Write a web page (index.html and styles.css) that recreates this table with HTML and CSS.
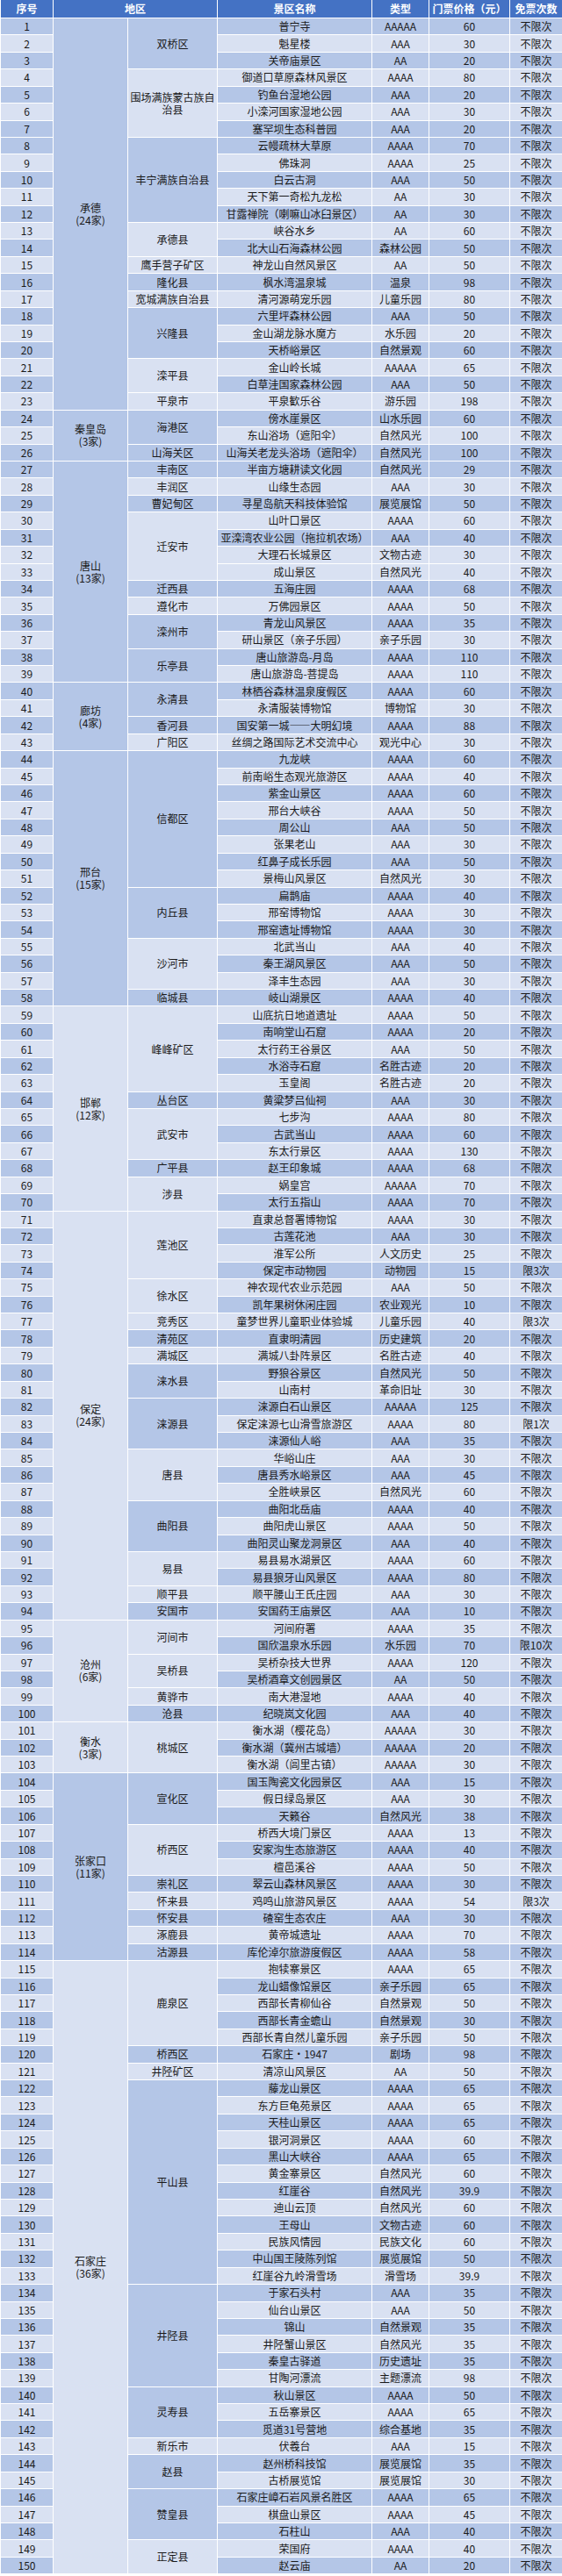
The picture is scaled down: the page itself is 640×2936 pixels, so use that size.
FILE: index.html
```html
<!DOCTYPE html>
<html lang="zh-CN">
<head>
<meta charset="utf-8">
<title>河北景区免票名单</title>
<link rel="stylesheet" href="styles.css">
</head>
<body>
<table class="tbl">
<colgroup><col class="c-no"><col class="c-city"><col class="c-dist"><col class="c-name"><col class="c-type"><col class="c-price"><col class="c-free"></colgroup>
<thead>
<tr><th>序号</th><th colspan="2">地区</th><th>景区名称</th><th>类型</th><th>门票价格（元）</th><th>免票次数</th></tr>
</thead>
<tbody>
<tr class="d"><td class="no">1</td><td class="gd" rowspan="23">承德<br>(24家)</td><td class="gd" rowspan="3">双桥区</td><td>普宁寺</td><td>AAAAA</td><td>60</td><td>不限次</td></tr>
<tr class="l"><td class="no">2</td><td>魁星楼</td><td>AAA</td><td>30</td><td>不限次</td></tr>
<tr class="d"><td class="no">3</td><td>关帝庙景区</td><td>AA</td><td>20</td><td>不限次</td></tr>
<tr class="l"><td class="no">4</td><td class="gl" rowspan="4">围场满族蒙古族自治县</td><td>御道口草原森林风景区</td><td>AAAA</td><td>80</td><td>不限次</td></tr>
<tr class="d"><td class="no">5</td><td>钓鱼台湿地公园</td><td>AAA</td><td>20</td><td>不限次</td></tr>
<tr class="l"><td class="no">6</td><td>小滦河国家湿地公园</td><td>AAA</td><td>30</td><td>不限次</td></tr>
<tr class="d"><td class="no">7</td><td>塞罕坝生态科普园</td><td>AAA</td><td>20</td><td>不限次</td></tr>
<tr class="d"><td class="no">8</td><td class="gd" rowspan="5">丰宁满族自治县</td><td>云幔疏林大草原</td><td>AAAA</td><td>70</td><td>不限次</td></tr>
<tr class="l"><td class="no">9</td><td>佛珠洞</td><td>AAAA</td><td>25</td><td>不限次</td></tr>
<tr class="d"><td class="no">10</td><td>白云古洞</td><td>AAA</td><td>50</td><td>不限次</td></tr>
<tr class="l"><td class="no">11</td><td>天下第一奇松九龙松</td><td>AA</td><td>30</td><td>不限次</td></tr>
<tr class="d"><td class="no">12</td><td>甘露禅院（喇嘛山冰臼景区）</td><td>AA</td><td>30</td><td>不限次</td></tr>
<tr class="l"><td class="no">13</td><td class="gl" rowspan="2">承德县</td><td>峡谷水乡</td><td>AA</td><td>60</td><td>不限次</td></tr>
<tr class="d"><td class="no">14</td><td>北大山石海森林公园</td><td>森林公园</td><td>50</td><td>不限次</td></tr>
<tr class="l"><td class="no">15</td><td class="gd">鹰手营子矿区</td><td>神龙山自然风景区</td><td>AA</td><td>50</td><td>不限次</td></tr>
<tr class="d"><td class="no">16</td><td class="gl">隆化县</td><td>枫水湾温泉城</td><td>温泉</td><td>98</td><td>不限次</td></tr>
<tr class="l"><td class="no">17</td><td class="gd">宽城满族自治县</td><td>清河源萌宠乐园</td><td>儿童乐园</td><td>80</td><td>不限次</td></tr>
<tr class="d"><td class="no">18</td><td class="gl" rowspan="3">兴隆县</td><td>六里坪森林公园</td><td>AAA</td><td>50</td><td>不限次</td></tr>
<tr class="l"><td class="no">19</td><td>金山湖龙脉水魔方</td><td>水乐园</td><td>20</td><td>不限次</td></tr>
<tr class="d"><td class="no">20</td><td>天桥峪景区</td><td>自然景观</td><td>60</td><td>不限次</td></tr>
<tr class="l"><td class="no">21</td><td class="gd" rowspan="2">滦平县</td><td>金山岭长城</td><td>AAAAA</td><td>65</td><td>不限次</td></tr>
<tr class="d"><td class="no">22</td><td>白草洼国家森林公园</td><td>AAA</td><td>50</td><td>不限次</td></tr>
<tr class="l"><td class="no">23</td><td class="gl">平泉市</td><td>平泉歓乐谷</td><td>游乐园</td><td>198</td><td>不限次</td></tr>
<tr class="d"><td class="no">24</td><td class="gl" rowspan="3">秦皇岛<br>(3家)</td><td class="gd" rowspan="2">海港区</td><td>傍水崖景区</td><td>山水乐园</td><td>60</td><td>不限次</td></tr>
<tr class="l"><td class="no">25</td><td>东山浴场（遮阳伞）</td><td>自然风光</td><td>100</td><td>不限次</td></tr>
<tr class="d"><td class="no">26</td><td class="gl">山海关区</td><td>山海关老龙头浴场（遮阳伞）</td><td>自然风光</td><td>100</td><td>不限次</td></tr>
<tr class="d"><td class="no">27</td><td class="gd" rowspan="13">唐山<br>(13家)</td><td class="gd">丰南区</td><td>半亩方塘耕读文化园</td><td>自然风光</td><td>29</td><td>不限次</td></tr>
<tr class="l"><td class="no">28</td><td class="gl">丰润区</td><td>山缘生态园</td><td>AAA</td><td>30</td><td>不限次</td></tr>
<tr class="d"><td class="no">29</td><td class="gd">曹妃甸区</td><td>寻星岛航天科技体验馆</td><td>展览展馆</td><td>50</td><td>不限次</td></tr>
<tr class="l"><td class="no">30</td><td class="gl" rowspan="4">迁安市</td><td>山叶口景区</td><td>AAAA</td><td>60</td><td>不限次</td></tr>
<tr class="d"><td class="no">31</td><td>亚滦湾农业公园（拖拉机农场）</td><td>AAA</td><td>40</td><td>不限次</td></tr>
<tr class="l"><td class="no">32</td><td>大理石长城景区</td><td>文物古迹</td><td>30</td><td>不限次</td></tr>
<tr class="l"><td class="no">33</td><td>成山景区</td><td>自然风光</td><td>40</td><td>不限次</td></tr>
<tr class="d"><td class="no">34</td><td class="gd">迁西县</td><td>五海庄园</td><td>AAAA</td><td>68</td><td>不限次</td></tr>
<tr class="l"><td class="no">35</td><td class="gl">遵化市</td><td>万佛园景区</td><td>AAAA</td><td>50</td><td>不限次</td></tr>
<tr class="d"><td class="no">36</td><td class="gd" rowspan="2">滦州市</td><td>青龙山风景区</td><td>AAAA</td><td>35</td><td>不限次</td></tr>
<tr class="l"><td class="no">37</td><td>研山景区（亲子乐园）</td><td>亲子乐园</td><td>30</td><td>不限次</td></tr>
<tr class="d"><td class="no">38</td><td class="gl" rowspan="2">乐亭县</td><td>唐山旅游岛-月岛</td><td>AAAA</td><td>110</td><td>不限次</td></tr>
<tr class="l"><td class="no">39</td><td>唐山旅游岛-菩提岛</td><td>AAAA</td><td>110</td><td>不限次</td></tr>
<tr class="d"><td class="no">40</td><td class="gl" rowspan="4">廊坊<br>(4家)</td><td class="gd" rowspan="2">永清县</td><td>林栖谷森林温泉度假区</td><td>AAAA</td><td>60</td><td>不限次</td></tr>
<tr class="l"><td class="no">41</td><td>永清服装博物馆</td><td>博物馆</td><td>30</td><td>不限次</td></tr>
<tr class="d"><td class="no">42</td><td class="gl">香河县</td><td>国安第一城——大明幻境</td><td>AAAA</td><td>88</td><td>不限次</td></tr>
<tr class="l"><td class="no">43</td><td class="gd">广阳区</td><td>丝绸之路国际艺术交流中心</td><td>观光中心</td><td>30</td><td>不限次</td></tr>
<tr class="d"><td class="no">44</td><td class="gd" rowspan="15">邢台<br>(15家)</td><td class="gl" rowspan="8">信都区</td><td>九龙峡</td><td>AAAA</td><td>60</td><td>不限次</td></tr>
<tr class="l"><td class="no">45</td><td>前南峪生态观光旅游区</td><td>AAAA</td><td>40</td><td>不限次</td></tr>
<tr class="d"><td class="no">46</td><td>紫金山景区</td><td>AAAA</td><td>60</td><td>不限次</td></tr>
<tr class="l"><td class="no">47</td><td>邢台大峡谷</td><td>AAAA</td><td>50</td><td>不限次</td></tr>
<tr class="d"><td class="no">48</td><td>周公山</td><td>AAA</td><td>50</td><td>不限次</td></tr>
<tr class="l"><td class="no">49</td><td>张果老山</td><td>AAA</td><td>30</td><td>不限次</td></tr>
<tr class="d"><td class="no">50</td><td>红鼻子成长乐园</td><td>AAA</td><td>50</td><td>不限次</td></tr>
<tr class="l"><td class="no">51</td><td>景梅山风景区</td><td>自然风光</td><td>30</td><td>不限次</td></tr>
<tr class="d"><td class="no">52</td><td class="gd" rowspan="3">内丘县</td><td>扁鹊庙</td><td>AAAA</td><td>40</td><td>不限次</td></tr>
<tr class="l"><td class="no">53</td><td>邢窑博物馆</td><td>AAAA</td><td>30</td><td>不限次</td></tr>
<tr class="d"><td class="no">54</td><td>邢窑遗址博物馆</td><td>AAAA</td><td>30</td><td>不限次</td></tr>
<tr class="l"><td class="no">55</td><td class="gl" rowspan="3">沙河市</td><td>北武当山</td><td>AAA</td><td>40</td><td>不限次</td></tr>
<tr class="d"><td class="no">56</td><td>秦王湖风景区</td><td>AAA</td><td>50</td><td>不限次</td></tr>
<tr class="l"><td class="no">57</td><td>泽丰生态园</td><td>AAA</td><td>30</td><td>不限次</td></tr>
<tr class="d"><td class="no">58</td><td class="gd">临城县</td><td>岐山湖景区</td><td>AAAA</td><td>40</td><td>不限次</td></tr>
<tr class="l"><td class="no">59</td><td class="gl" rowspan="12">邯郸<br>(12家)</td><td class="gl" rowspan="5">峰峰矿区</td><td>山底抗日地道遗址</td><td>AAAA</td><td>50</td><td>不限次</td></tr>
<tr class="d"><td class="no">60</td><td>南响堂山石窟</td><td>AAAA</td><td>20</td><td>不限次</td></tr>
<tr class="l"><td class="no">61</td><td>太行药王谷景区</td><td>AAA</td><td>50</td><td>不限次</td></tr>
<tr class="d"><td class="no">62</td><td>水浴寺石窟</td><td>名胜古迹</td><td>20</td><td>不限次</td></tr>
<tr class="l"><td class="no">63</td><td>玉皇阁</td><td>名胜古迹</td><td>20</td><td>不限次</td></tr>
<tr class="d"><td class="no">64</td><td class="gd">丛台区</td><td>黄粱梦吕仙祠</td><td>AAA</td><td>30</td><td>不限次</td></tr>
<tr class="l"><td class="no">65</td><td class="gl" rowspan="3">武安市</td><td>七步沟</td><td>AAAA</td><td>80</td><td>不限次</td></tr>
<tr class="d"><td class="no">66</td><td>古武当山</td><td>AAAA</td><td>60</td><td>不限次</td></tr>
<tr class="l"><td class="no">67</td><td>东太行景区</td><td>AAAA</td><td>130</td><td>不限次</td></tr>
<tr class="d"><td class="no">68</td><td class="gd">广平县</td><td>赵王印象城</td><td>AAAA</td><td>68</td><td>不限次</td></tr>
<tr class="l"><td class="no">69</td><td class="gl" rowspan="2">涉县</td><td>娲皇宫</td><td>AAAAA</td><td>70</td><td>不限次</td></tr>
<tr class="d"><td class="no">70</td><td>太行五指山</td><td>AAAA</td><td>70</td><td>不限次</td></tr>
<tr class="l"><td class="no">71</td><td class="gd" rowspan="24">保定<br>(24家)</td><td class="gd" rowspan="4">莲池区</td><td>直隶总督署博物馆</td><td>AAAA</td><td>30</td><td>不限次</td></tr>
<tr class="d"><td class="no">72</td><td>古莲花池</td><td>AAA</td><td>30</td><td>不限次</td></tr>
<tr class="l"><td class="no">73</td><td>淮军公所</td><td>人文历史</td><td>25</td><td>不限次</td></tr>
<tr class="d"><td class="no">74</td><td>保定市动物园</td><td>动物园</td><td>15</td><td>限3次</td></tr>
<tr class="l"><td class="no">75</td><td class="gl" rowspan="2">徐水区</td><td>神农现代农业示范园</td><td>AAA</td><td>50</td><td>不限次</td></tr>
<tr class="d"><td class="no">76</td><td>凯年果树休闲庄园</td><td>农业观光</td><td>10</td><td>不限次</td></tr>
<tr class="l"><td class="no">77</td><td class="gd">竞秀区</td><td>童梦世界儿童职业体验城</td><td>儿童乐园</td><td>40</td><td>限3次</td></tr>
<tr class="d"><td class="no">78</td><td class="gl">清苑区</td><td>直隶明清园</td><td>历史建筑</td><td>20</td><td>不限次</td></tr>
<tr class="l"><td class="no">79</td><td class="gd">满城区</td><td>满城八卦阵景区</td><td>名胜古迹</td><td>40</td><td>不限次</td></tr>
<tr class="d"><td class="no">80</td><td class="gl" rowspan="2">涞水县</td><td>野狼谷景区</td><td>自然风光</td><td>50</td><td>不限次</td></tr>
<tr class="l"><td class="no">81</td><td>山南村</td><td>革命旧址</td><td>30</td><td>不限次</td></tr>
<tr class="d"><td class="no">82</td><td class="gd" rowspan="3">涞源县</td><td>涞源白石山景区</td><td>AAAAA</td><td>125</td><td>不限次</td></tr>
<tr class="l"><td class="no">83</td><td>保定涞源七山滑雪旅游区</td><td>AAAA</td><td>80</td><td>限1次</td></tr>
<tr class="d"><td class="no">84</td><td>涞源仙人峪</td><td>AAA</td><td>35</td><td>不限次</td></tr>
<tr class="l"><td class="no">85</td><td class="gl" rowspan="3">唐县</td><td>华峪山庄</td><td>AAA</td><td>30</td><td>不限次</td></tr>
<tr class="d"><td class="no">86</td><td>唐县秀水峪景区</td><td>AAA</td><td>45</td><td>不限次</td></tr>
<tr class="l"><td class="no">87</td><td>全胜峡景区</td><td>自然风光</td><td>60</td><td>不限次</td></tr>
<tr class="d"><td class="no">88</td><td class="gd" rowspan="3">曲阳县</td><td>曲阳北岳庙</td><td>AAAA</td><td>40</td><td>不限次</td></tr>
<tr class="l"><td class="no">89</td><td>曲阳虎山景区</td><td>AAAA</td><td>50</td><td>不限次</td></tr>
<tr class="d"><td class="no">90</td><td>曲阳灵山聚龙洞景区</td><td>AAA</td><td>40</td><td>不限次</td></tr>
<tr class="l"><td class="no">91</td><td class="gl" rowspan="2">易县</td><td>易县易水湖景区</td><td>AAAA</td><td>60</td><td>不限次</td></tr>
<tr class="d"><td class="no">92</td><td>易县狼牙山风景区</td><td>AAAA</td><td>80</td><td>不限次</td></tr>
<tr class="l"><td class="no">93</td><td class="gd">顺平县</td><td>顺平腰山王氏庄园</td><td>AAA</td><td>30</td><td>不限次</td></tr>
<tr class="d"><td class="no">94</td><td class="gl">安国市</td><td>安国药王庙景区</td><td>AAA</td><td>10</td><td>不限次</td></tr>
<tr class="l"><td class="no">95</td><td class="gl" rowspan="6">沧州<br>(6家)</td><td class="gd" rowspan="2">河间市</td><td>河间府署</td><td>AAAA</td><td>35</td><td>不限次</td></tr>
<tr class="d"><td class="no">96</td><td>国欣温泉水乐园</td><td>水乐园</td><td>70</td><td>限10次</td></tr>
<tr class="l"><td class="no">97</td><td class="gl" rowspan="2">吴桥县</td><td>吴桥杂技大世界</td><td>AAAA</td><td>120</td><td>不限次</td></tr>
<tr class="d"><td class="no">98</td><td>吴桥酒章文创园景区</td><td>AA</td><td>50</td><td>不限次</td></tr>
<tr class="l"><td class="no">99</td><td class="gd">黄骅市</td><td>南大港湿地</td><td>AAAA</td><td>40</td><td>不限次</td></tr>
<tr class="d"><td class="no">100</td><td class="gl">沧县</td><td>纪晓岚文化园</td><td>AAA</td><td>40</td><td>不限次</td></tr>
<tr class="l"><td class="no">101</td><td class="gd" rowspan="3">衡水<br>(3家)</td><td class="gd" rowspan="3">桃城区</td><td>衡水湖（樱花岛）</td><td>AAAAA</td><td>30</td><td>不限次</td></tr>
<tr class="d"><td class="no">102</td><td>衡水湖（冀州古城墙）</td><td>AAAAA</td><td>20</td><td>不限次</td></tr>
<tr class="l"><td class="no">103</td><td>衡水湖（闾里古镇）</td><td>AAAAA</td><td>30</td><td>不限次</td></tr>
<tr class="d"><td class="no">104</td><td class="gl" rowspan="11">张家口<br>(11家)</td><td class="gl" rowspan="3">宣化区</td><td>国玉陶瓷文化园景区</td><td>AAA</td><td>15</td><td>不限次</td></tr>
<tr class="l"><td class="no">105</td><td>假日绿岛景区</td><td>AAA</td><td>30</td><td>不限次</td></tr>
<tr class="d"><td class="no">106</td><td>天籁谷</td><td>自然风光</td><td>38</td><td>不限次</td></tr>
<tr class="l"><td class="no">107</td><td class="gd" rowspan="3">桥西区</td><td>桥西大境门景区</td><td>AAAA</td><td>13</td><td>不限次</td></tr>
<tr class="d"><td class="no">108</td><td>安家沟生态旅游区</td><td>AAAA</td><td>40</td><td>不限次</td></tr>
<tr class="l"><td class="no">109</td><td>檀邑溪谷</td><td>AAAA</td><td>50</td><td>不限次</td></tr>
<tr class="d"><td class="no">110</td><td class="gl">崇礼区</td><td>翠云山森林风景区</td><td>AAAA</td><td>30</td><td>不限次</td></tr>
<tr class="l"><td class="no">111</td><td class="gd">怀来县</td><td>鸡鸣山旅游风景区</td><td>AAAA</td><td>54</td><td>限3次</td></tr>
<tr class="d"><td class="no">112</td><td class="gl">怀安县</td><td>碴窑生态农庄</td><td>AAA</td><td>30</td><td>不限次</td></tr>
<tr class="l"><td class="no">113</td><td class="gd">涿鹿县</td><td>黄帝城遗址</td><td>AAAA</td><td>70</td><td>不限次</td></tr>
<tr class="d"><td class="no">114</td><td class="gl">沽源县</td><td>库伦淖尔旅游度假区</td><td>AAAA</td><td>58</td><td>不限次</td></tr>
<tr class="l"><td class="no">115</td><td class="gd" rowspan="36">石家庄<br>(36家)</td><td class="gd" rowspan="5">鹿泉区</td><td>抱犊寨景区</td><td>AAAA</td><td>65</td><td>不限次</td></tr>
<tr class="d"><td class="no">116</td><td>龙山蜡像馆景区</td><td>亲子乐园</td><td>65</td><td>不限次</td></tr>
<tr class="l"><td class="no">117</td><td>西部长青柳仙谷</td><td>自然景观</td><td>50</td><td>不限次</td></tr>
<tr class="d"><td class="no">118</td><td>西部长青金蟾山</td><td>自然景观</td><td>30</td><td>不限次</td></tr>
<tr class="l"><td class="no">119</td><td>西部长青自然儿童乐园</td><td>亲子乐园</td><td>50</td><td>不限次</td></tr>
<tr class="d"><td class="no">120</td><td class="gl">桥西区</td><td>石家庄·1947</td><td>剧场</td><td>98</td><td>不限次</td></tr>
<tr class="l"><td class="no">121</td><td class="gd">井陉矿区</td><td>清凉山风景区</td><td>AA</td><td>50</td><td>不限次</td></tr>
<tr class="d"><td class="no">122</td><td class="gl" rowspan="12">平山县</td><td>藤龙山景区</td><td>AAAA</td><td>65</td><td>不限次</td></tr>
<tr class="l"><td class="no">123</td><td>东方巨龟苑景区</td><td>AAAA</td><td>65</td><td>不限次</td></tr>
<tr class="d"><td class="no">124</td><td>天桂山景区</td><td>AAAA</td><td>65</td><td>不限次</td></tr>
<tr class="l"><td class="no">125</td><td>银河洞景区</td><td>AAAA</td><td>60</td><td>不限次</td></tr>
<tr class="d"><td class="no">126</td><td>黑山大峡谷</td><td>AAAA</td><td>65</td><td>不限次</td></tr>
<tr class="l"><td class="no">127</td><td>黄金寨景区</td><td>自然风光</td><td>60</td><td>不限次</td></tr>
<tr class="d"><td class="no">128</td><td>红崖谷</td><td>自然风光</td><td>39.9</td><td>不限次</td></tr>
<tr class="l"><td class="no">129</td><td>迪山云顶</td><td>自然风光</td><td>60</td><td>不限次</td></tr>
<tr class="d"><td class="no">130</td><td>王母山</td><td>文物古迹</td><td>60</td><td>不限次</td></tr>
<tr class="l"><td class="no">131</td><td>民族风情园</td><td>民族文化</td><td>60</td><td>不限次</td></tr>
<tr class="d"><td class="no">132</td><td>中山国王陵陈列馆</td><td>展览展馆</td><td>50</td><td>不限次</td></tr>
<tr class="l"><td class="no">133</td><td>红崖谷九岭滑雪场</td><td>滑雪场</td><td>39.9</td><td>不限次</td></tr>
<tr class="d"><td class="no">134</td><td class="gd" rowspan="6">井陉县</td><td>于家石头村</td><td>AAA</td><td>35</td><td>不限次</td></tr>
<tr class="l"><td class="no">135</td><td>仙台山景区</td><td>AAA</td><td>50</td><td>不限次</td></tr>
<tr class="d"><td class="no">136</td><td>锦山</td><td>自然景观</td><td>35</td><td>不限次</td></tr>
<tr class="l"><td class="no">137</td><td>井陉蟹山景区</td><td>自然风光</td><td>35</td><td>不限次</td></tr>
<tr class="d"><td class="no">138</td><td>秦皇古驿道</td><td>历史遗址</td><td>35</td><td>不限次</td></tr>
<tr class="l"><td class="no">139</td><td>甘陶河漂流</td><td>主题漂流</td><td>98</td><td>不限次</td></tr>
<tr class="d"><td class="no">140</td><td class="gl" rowspan="3">灵寿县</td><td>秋山景区</td><td>AAAA</td><td>50</td><td>不限次</td></tr>
<tr class="l"><td class="no">141</td><td>五岳寨景区</td><td>AAAA</td><td>65</td><td>不限次</td></tr>
<tr class="d"><td class="no">142</td><td>觅道31号营地</td><td>综合基地</td><td>35</td><td>不限次</td></tr>
<tr class="l"><td class="no">143</td><td class="gd">新乐市</td><td>伏羲台</td><td>AAA</td><td>15</td><td>不限次</td></tr>
<tr class="d"><td class="no">144</td><td class="gl" rowspan="2">赵县</td><td>赵州桥科技馆</td><td>展览展馆</td><td>35</td><td>不限次</td></tr>
<tr class="l"><td class="no">145</td><td>古桥展览馆</td><td>展览展馆</td><td>30</td><td>不限次</td></tr>
<tr class="d"><td class="no">146</td><td class="gd" rowspan="3">赞皇县</td><td>石家庄嶂石岩风景名胜区</td><td>AAAA</td><td>65</td><td>不限次</td></tr>
<tr class="l"><td class="no">147</td><td>棋盘山景区</td><td>AAAA</td><td>45</td><td>不限次</td></tr>
<tr class="d"><td class="no">148</td><td>石柱山</td><td>AAA</td><td>40</td><td>不限次</td></tr>
<tr class="l"><td class="no">149</td><td class="gl" rowspan="2">正定县</td><td>荣国府</td><td>AAAA</td><td>40</td><td>不限次</td></tr>
<tr class="d"><td class="no">150</td><td>赵云庙</td><td>AA</td><td>20</td><td>不限次</td></tr>
</tbody>
</table>
</body>
</html>
```
FILE: styles.css
```css
html, body {
  margin: 0;
  padding: 0;
  background: #ffffff;
}
body {
  font-family: "Noto Sans CJK SC", "Noto Sans", "Liberation Sans", sans-serif;
  font-size: 12px;
  color: #1a1a1a;
}
.tbl {
  width: 640px;
  table-layout: fixed;
  border-collapse: collapse;
}
.c-no { width: 60px; }
.c-city { width: 85px; }
.c-dist { width: 102px; }
.c-name { width: 176px; }
.c-type { width: 65px; }
.c-price { width: 92px; }
.c-free { width: 60px; }
.tbl th {
  height: 20px;
  padding: 0;
  background: #4472c4;
  color: #ffffff;
  font-weight: bold;
  font-size: 12px;
  line-height: 14px;
  border: 1px solid #ffffff;
  border-top: 0;
  white-space: nowrap;
}
.tbl tbody tr {
  height: 19.43px;
}
.tbl td {
  padding: 0;
  text-align: center;
  vertical-align: middle;
  line-height: 14px;
  border: 1px solid #ffffff;
  white-space: nowrap;
}
.tbl tr.d td { background: #b4c6e7; }
.tbl tr.l td { background: #d9e1f2; }
.tbl td.no { background: #b4c6e7; }
.tbl td.gd { background: #b4c6e7; white-space: normal; }
.tbl td.gl { background: #d9e1f2; white-space: normal; }
```
